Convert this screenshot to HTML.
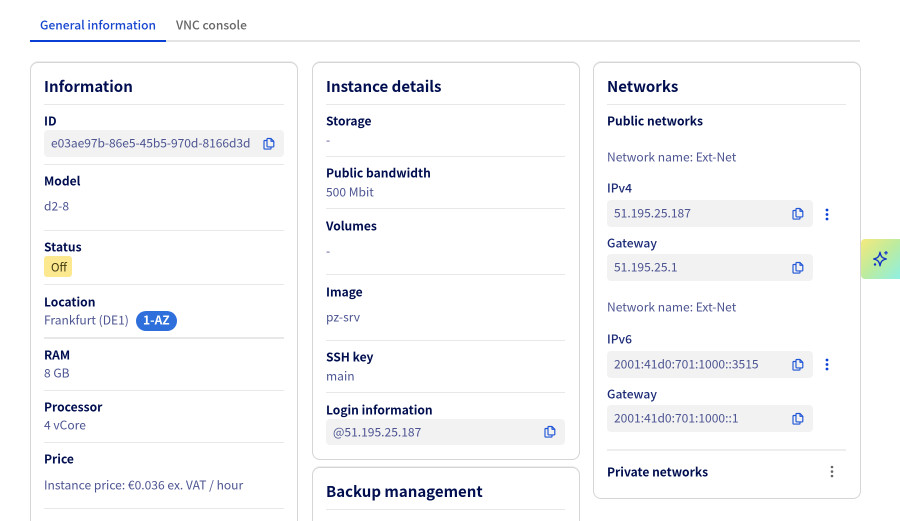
<!DOCTYPE html>
<html><head><meta charset="utf-8"><style>
html,body{margin:0;padding:0;background:#fff;overflow:hidden;width:900px;height:521px}
#r{position:relative;width:900px;height:521px;overflow:hidden;background:#fff;font-family:"Noto Sans CJK JP","Liberation Sans",sans-serif;font-size:12.05px;color:#4d5592}
#r div{position:absolute;box-sizing:border-box}
.t{white-space:nowrap;height:20px;line-height:20px;margin-top:1px;transform:translateY(-.5px)}
.b{font-weight:700;color:#000e4f}
.h{font-size:15px;font-weight:700;color:#000e4f;height:24px;line-height:24px;white-space:nowrap;margin-top:1px}
.c{border:1px solid #d5d5d5;border-radius:8px;background:#fff;box-shadow:0 -1px 0 #eee}
.o{border-bottom:none;border-radius:8px 8px 0 0}
.l{height:1px;background:#e8e8e8}
.x{background:#f2f2f2;border-radius:4px}
svg{position:absolute;overflow:visible}
</style></head><body><div id="r">
<svg width="0" height="0" style="position:absolute"><defs>
<g id="cp" fill="none" stroke="#1f55d6" stroke-width="1.15" stroke-linejoin="round"><path d="M4 3.500H1.600a.6.6 0 0 0-.6.6v7.400a.6.6 0 0 0 .6.6h5.800a.6.6 0 0 0 .6-.6V10"/><path d="M4.600 1.500h3.400l2.800 2.800v5a.6.6 0 0 1-.6.6H4.600a.6.6 0 0 1-.6-.6V2.100a.6.6 0 0 1 .6-.6z"/><path d="M8 1.500v2.800h2.800"/></g>
</defs></svg>

<div style="left:30px;top:40px;width:830px;height:2px;background:#e4e4e4"></div>
<div style="left:30px;top:40px;width:136px;height:2px;background:#0a3fd6"></div>
<div class="t" style="left:40px;top:15px;font-weight:500;color:#1746cf">General information</div>
<div class="t" style="left:176px;top:15px;font-weight:500;color:#666">VNC console</div>

<div class="c o" style="left:30px;top:62px;width:268px;height:459px"></div>
<div class="h" style="left:44px;top:74px">Information</div>
<div class="l" style="left:44px;top:104px;width:240px"></div>
<div class="t b" style="left:44px;top:111px">ID</div>
<div class="x" style="left:44px;top:130px;width:240px;height:27px"></div>
<div class="t" style="left:51px;top:133px;width:200px;overflow:hidden;letter-spacing:-.06px">e03ae97b-86e5-45b5-970d-8166d3d</div>
<svg style="left:263px;top:137px" width="12" height="14"><use href="#cp"/></svg>
<div class="l" style="left:44px;top:164px;width:240px"></div>
<div class="t b" style="left:44px;top:171px">Model</div>
<div class="t" style="left:44px;top:196px">d2-8</div>
<div class="l" style="left:44px;top:230px;width:240px"></div>
<div class="t b" style="left:44px;top:237px">Status</div>
<div style="left:44px;top:256px;width:28px;height:21px;background:#fbe88f;border-radius:3px"></div>
<div class="t" style="left:51px;top:257px;font-size:11.500px;color:#403a10">Off</div>
<div class="l" style="left:44px;top:284px;width:240px"></div>
<div class="t b" style="left:44px;top:292px">Location</div>
<div class="t" style="left:44px;top:310px">Frankfurt (DE1)</div>
<div style="left:136px;top:311px;width:41px;height:20px;background:#2e6fdc;border-radius:10px"></div>
<div class="t" style="left:143px;top:310px;font-weight:700;color:#fff">1-AZ</div>
<div class="l" style="left:44px;top:337px;width:240px;height:2px"></div>
<div class="t b" style="left:44px;top:345px">RAM</div>
<div class="t" style="left:44px;top:363px">8 GB</div>
<div class="l" style="left:44px;top:390px;width:240px"></div>
<div class="t b" style="left:44px;top:397px">Processor</div>
<div class="t" style="left:44px;top:415px">4 vCore</div>
<div class="l" style="left:44px;top:442px;width:240px"></div>
<div class="t b" style="left:44px;top:449px">Price</div>
<div class="t" style="left:44px;top:475px">Instance price: €0.036 ex. VAT / hour</div>
<div class="l" style="left:44px;top:508px;width:240px"></div>

<div class="c" style="left:312px;top:62px;width:268px;height:398px"></div>
<div class="h" style="left:326px;top:74px">Instance details</div>
<div class="l" style="left:326px;top:104px;width:239px"></div>
<div class="t b" style="left:326px;top:111px">Storage</div>
<div class="t" style="left:326px;top:130px">-</div>
<div class="l" style="left:326px;top:156px;width:239px"></div>
<div class="t b" style="left:326px;top:163px">Public bandwidth</div>
<div class="t" style="left:326px;top:182px">500 Mbit</div>
<div class="l" style="left:326px;top:208px;width:239px"></div>
<div class="t b" style="left:326px;top:216px">Volumes</div>
<div class="t" style="left:326px;top:241px">-</div>
<div class="l" style="left:326px;top:274px;width:239px"></div>
<div class="t b" style="left:326px;top:282px">Image</div>
<div class="t" style="left:326px;top:307px">pz-srv</div>
<div class="l" style="left:326px;top:340px;width:239px"></div>
<div class="t b" style="left:326px;top:347px">SSH key</div>
<div class="t" style="left:326px;top:366px">main</div>
<div class="l" style="left:326px;top:392px;width:239px"></div>
<div class="t b" style="left:326px;top:400px">Login information</div>
<div class="x" style="left:326px;top:419px;width:239px;height:26px"></div>
<div class="t" style="left:333px;top:422px">@51.195.25.187</div>
<svg style="left:544px;top:425px" width="12" height="14"><use href="#cp"/></svg>

<div class="c o" style="left:312px;top:467px;width:268px;height:54px"></div>
<div class="h" style="left:326px;top:479px">Backup management</div>
<div class="l" style="left:326px;top:509px;width:239px"></div>

<div class="c" style="left:593px;top:62px;width:268px;height:437px"></div>
<div class="h" style="left:607px;top:74px">Networks</div>
<div class="l" style="left:607px;top:104px;width:239px"></div>
<div class="t b" style="left:607px;top:111px">Public networks</div>
<div class="t" style="left:607px;top:147px">Network name: Ext-Net</div>
<div class="t" style="left:607px;top:178px;font-weight:500;color:#1c2a78">IPv4</div>
<div class="x" style="left:607px;top:200px;width:206px;height:27px"></div>
<div class="t" style="left:614px;top:203px">51.195.25.187</div>
<svg style="left:792px;top:207px" width="12" height="14"><use href="#cp"/></svg>
<svg style="left:825px;top:207.500px" width="4" height="13"><circle cx="2" cy="2" r="1.400" fill="#0a3fd6"/><circle cx="2" cy="6.500" r="1.400" fill="#0a3fd6"/><circle cx="2" cy="11" r="1.400" fill="#0a3fd6"/></svg>
<div class="t" style="left:607px;top:233px;font-weight:500;color:#1c2a78">Gateway</div>
<div class="x" style="left:607px;top:254px;width:206px;height:27px"></div>
<div class="t" style="left:614px;top:257px">51.195.25.1</div>
<svg style="left:792px;top:261px" width="12" height="14"><use href="#cp"/></svg>
<div class="t" style="left:607px;top:297px">Network name: Ext-Net</div>
<div class="t" style="left:607px;top:329px;font-weight:500;color:#1c2a78">IPv6</div>
<div class="x" style="left:607px;top:351px;width:206px;height:27px"></div>
<div class="t" style="left:614px;top:354px">2001:41d0:701:1000::3515</div>
<svg style="left:792px;top:358px" width="12" height="14"><use href="#cp"/></svg>
<svg style="left:825px;top:358px" width="4" height="13"><circle cx="2" cy="2" r="1.400" fill="#0a3fd6"/><circle cx="2" cy="6.500" r="1.400" fill="#0a3fd6"/><circle cx="2" cy="11" r="1.400" fill="#0a3fd6"/></svg>
<div class="t" style="left:607px;top:384px;font-weight:500;color:#1c2a78">Gateway</div>
<div class="x" style="left:607px;top:405px;width:206px;height:27px"></div>
<div class="t" style="left:614px;top:408px">2001:41d0:701:1000::1</div>
<svg style="left:792px;top:412px" width="12" height="14"><use href="#cp"/></svg>
<div class="l" style="left:607px;top:449px;width:239px;height:2px;background:#eee"></div>
<div class="t b" style="left:607px;top:462px">Private networks</div>
<svg style="left:830px;top:465px" width="4" height="13"><circle cx="2" cy="2" r="1.300" fill="#666"/><circle cx="2" cy="6.600" r="1.300" fill="#666"/><circle cx="2" cy="11" r="1.300" fill="#666"/></svg>

<div style="left:861px;top:239px;width:39px;height:40px;border-radius:4px 0 0 4px;background:linear-gradient(135deg,#f5ea7c 0%,#bdeb9e 50%,#8ef0e4 100%)"></div>
<svg style="left:872px;top:250px" width="18" height="18" viewBox="0 0 18 18"><path d="M8 2.200C8.800 6.600 9.900 7.900 14.300 9 9.900 10.100 8.800 11.400 8 15.800 7.200 11.400 6.100 10.100 1.700 9 6.100 7.900 7.200 6.600 8 2.200Z" fill="none" stroke="#0f32c8" stroke-width="1.400" stroke-linejoin="round"/><path d="M14 1v3.600M12.200 2.800h3.600" stroke="#0f32c8" stroke-width="1.200"/><circle cx="3" cy="14.500" r="1.200" fill="#0f32c8"/></svg>
</div></body></html>
